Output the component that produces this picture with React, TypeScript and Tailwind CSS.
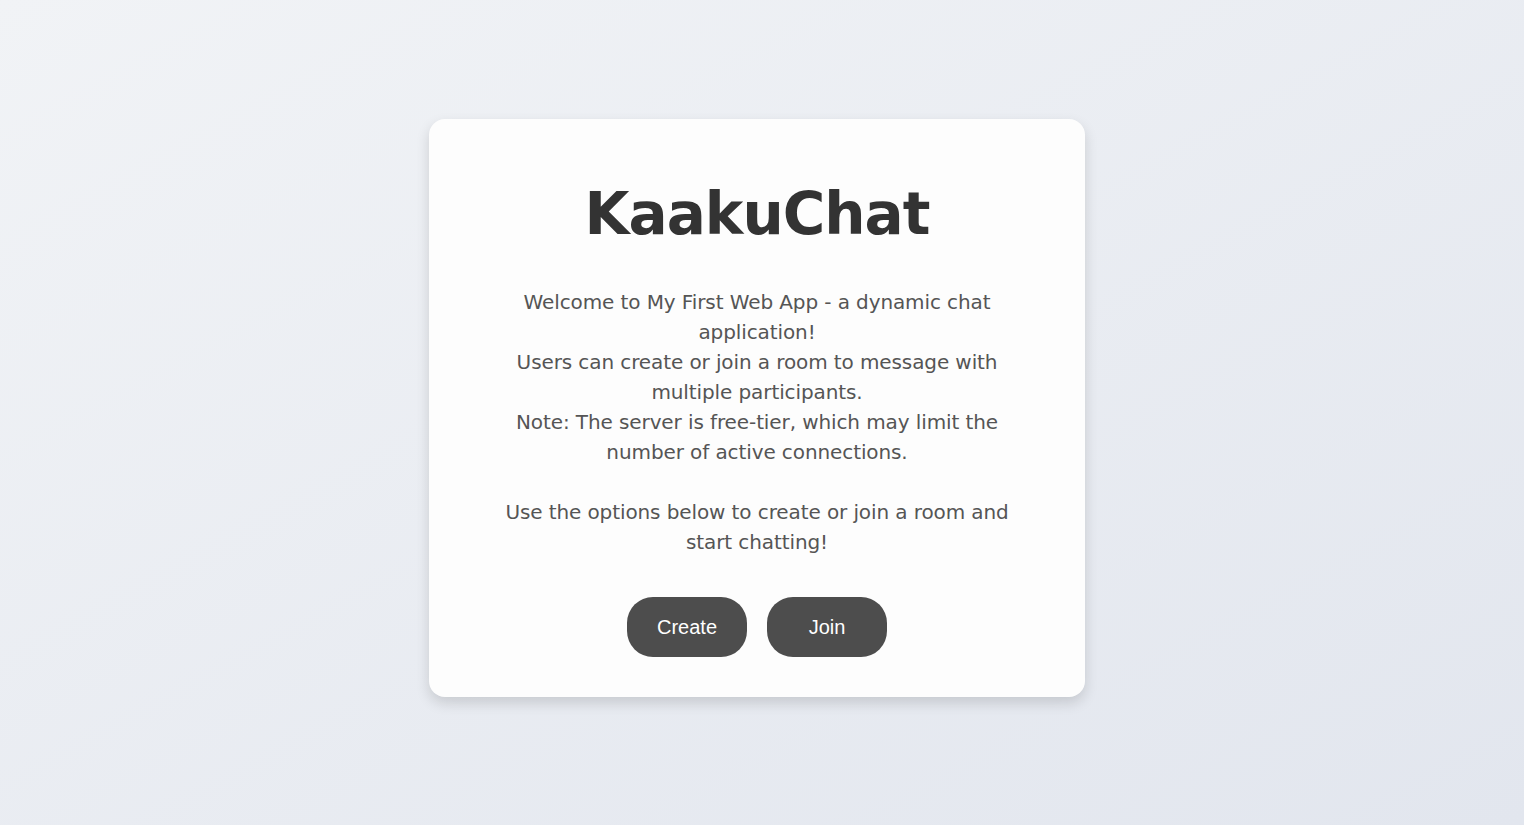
export default function App() {
  return (
    <div className="flex min-h-screen items-center justify-center bg-gradient-to-br from-[#f1f3f6] to-[#e2e6ee] pr-[10px] pb-[9px] font-['DejaVu_Sans',sans-serif]">
      <div className="w-[656px] rounded-2xl bg-[#fdfdfd] px-10 pt-10 pb-10 text-center shadow-[0_6px_14px_rgba(0,0,0,0.14)]">
        <h1 className="h-[96px] pt-[15px] text-[58px] leading-[80px] font-bold tracking-[-1px] text-[#333333]">
          KaakuChat
        </h1>
        <p className="mt-[32px] text-[20px] leading-[30px] tracking-[-0.1px] text-[#555555]">
          Welcome to My First Web App - a dynamic chat
          <br />
          application!
          <br />
          Users can create or join a room to message with
          <br />
          multiple participants.
          <br />
          Note: The server is free-tier, which may limit the
          <br />
          number of active connections.
          <br />
          <br />
          Use the options below to create or join a room and
          <br />
          start chatting!
        </p>
        <div className="mt-10 flex justify-center gap-5">
          <button
            type="button"
            className="h-[60px] w-[120px] rounded-[26px] bg-[#4d4d4d] font-['Liberation_Sans',sans-serif] text-[20px] text-white">
            Create
          </button>
          <button
            type="button"
            className="h-[60px] w-[120px] rounded-[26px] bg-[#4d4d4d] font-['Liberation_Sans',sans-serif] text-[20px] text-white">
            Join
          </button>
        </div>
      </div>
    </div>
  );
}
